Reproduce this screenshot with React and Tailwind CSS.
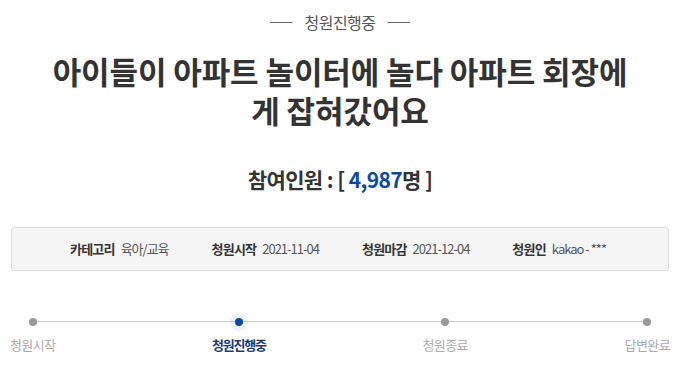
import React from "react"

const steps = [
  { label: "청원시작", active: false },
  { label: "청원진행중", active: true },
  { label: "청원종료", active: false },
  { label: "답변완료", active: false },
]

const info = [
  { label: "카테고리", value: "육아/교육" },
  { label: "청원시작", value: "2021-11-04" },
  { label: "청원마감", value: "2021-12-04" },
  { label: "청원인", value: "kakao - ***" },
]

export default function App() {
  return (
    <div
      className="h-[390px] w-[680px] overflow-hidden bg-white"
      style={{ fontFamily: '"Noto Sans CJK KR", "Noto Sans", sans-serif' }}
    >
      {/* status */}
      <div className="flex items-center justify-center gap-3 pt-[10px] text-[16px] leading-[24px] text-[#555]">
        <span className="h-px w-[22px] bg-[#666]" />
        <span className="tracking-[-0.5px]">청원진행중</span>
        <span className="h-px w-[22px] bg-[#666]" />
      </div>

      {/* title */}
      <h1 className="mt-[17px] text-center text-[31px] font-bold leading-[39px] tracking-[-0.1px] text-[#333]">
        아이들이 아파트 놀이터에 놀다 아파트 회장에
        <br />
        게 잡혀갔어요
      </h1>

      {/* count */}
      <p className="mt-[36px] text-center text-[21px] font-bold leading-[28px] tracking-[-0.6px] text-[#333]">
        참여인원 : [ <span className="text-[#0b4aa2]">4,987</span>명 ]
      </p>

      {/* info box */}
      <div className="mx-[11px] mt-[34px] flex h-[44px] items-center gap-[43px] rounded-[3px] border border-[#dcdcdc] bg-[#f5f5f5] pl-[58px] text-[13px]">
        {info.map((item) => (
          <div key={item.label} className="flex items-center gap-[6px]">
            <span className="font-bold tracking-[-0.8px] text-[#333]">{item.label}</span>
            <span className="tracking-[-1px] text-[#555]">{item.value}</span>
          </div>
        ))}
      </div>

      {/* progress */}
      <div className="relative mx-[10px] mt-[47px]">
        <div className="absolute left-[22px] right-[23px] top-[3px] h-px bg-[#cfcfcf]" />
        <div className="relative flex justify-between">
          {steps.map((s) => (
            <div key={s.label} className="flex flex-col items-center">
              {s.active ? (
                <span className="h-[8px] w-[8px] rounded-full bg-[#0b4aa2] shadow-[0_0_0_5px_rgba(11,74,162,0.07)]" />
              ) : (
                <span className="h-[8px] w-[8px] rounded-full bg-[#999]" />
              )}
              <span
                className={`mt-[9px] text-[13px] leading-[20px] ${
                  s.active ? "font-bold tracking-[-1.2px] text-[#1b3c73]" : "tracking-[-0.6px] text-[#aaa]"
                }`}
              >
                {s.label}
              </span>
            </div>
          ))}
        </div>
      </div>
    </div>
  )
}
